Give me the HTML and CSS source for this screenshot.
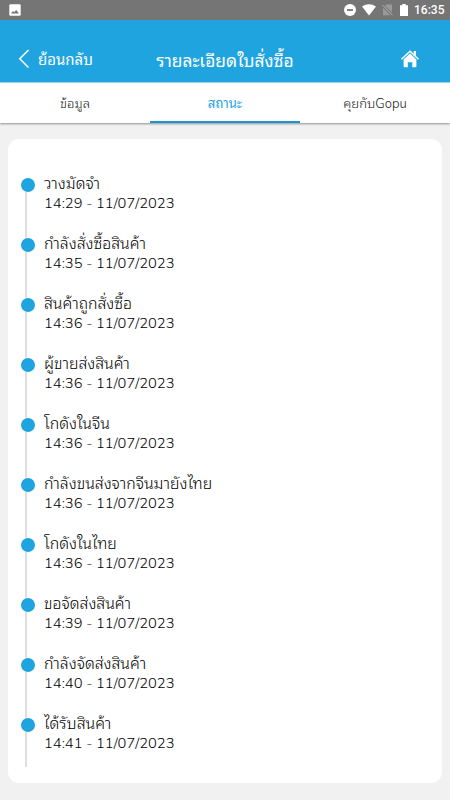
FILE: index.html
```html
<!DOCTYPE html>
<html lang="th">
<head>
  <meta charset="UTF-8" />
  <meta name="viewport" content="width=device-width, initial-scale=1.0"/>
  <title>รายละเอียดใบสั่งซื้อ</title>
  <link rel="stylesheet" href="styles.css">
</head>
<body>
  <div class="statusbar">
    <svg class="picture" width="12" height="12" viewBox="0 0 12 12"><rect x="0.3" y="0.3" width="11.4" height="11.4" rx="1.3" fill="#fff"/><path d="M2 9.5l2-2.6 1.2 1.4L7.2 6 10 9.5z" fill="#757575"/></svg>
    <div class="status-icons">
      <svg width="12" height="12" viewBox="0 0 12 12"><circle cx="6" cy="6" r="6" fill="#fff"/><rect x="3" y="5.1" width="6" height="1.8" fill="#757575"/></svg>
      <svg width="14" height="12" viewBox="0 0 14 12"><path d="M0 2.6C4 -0.7 10 -0.7 14 2.6L7 11.4z" fill="#fff"/></svg>
      <svg class="sim" width="11" height="12" viewBox="0 0 11 12"><path d="M4.2 0.6H10v8L3 1.8z M1 3.8l7.3 7.4H1z" fill="#999"/><path d="M0.4 0.9l10.2 10.4" stroke="#b5b5b5"/></svg>
      <svg class="battery" width="8" height="12" viewBox="0 0 8 12"><path d="M2.3 0h3.4v1.3H8V12H0V1.3h2.3z" fill="#fff"/></svg>
      <span class="clock">16:35</span>
    </div>
  </div>

  <header>
    <a class="back" href="#back">
      <svg width="12" height="20" viewBox="0 0 12 20"><path d="M10.5 1L1.8 9.8l8.7 8.7" fill="none" stroke="#fff" stroke-width="1.5"/></svg>
      <span>ย้อนกลับ</span>
    </a>
    <h1>รายละเอียดใบสั่งซื้อ</h1>
    <a class="home" href="#home">
      <svg width="18" height="18" viewBox="0 0 18 18"><path d="M0.5 9.2L9 1.2l8.5 8" fill="none" stroke="#fff" stroke-width="1.5"/><path d="M12.7 1h2.2v5l-2.2-2z M9 3.6l6.4 6v6.6q0 1-1 1h-3.1v-5H6.8v5H3.6q-1 0-1-1V9.6z" fill="#fff"/></svg>
    </a>
  </header>

  <nav>
    <a href="#info">ข้อมูล</a>
    <a class="active" href="#status">สถานะ</a>
    <a href="#chat">คุยกับGopu</a>
  </nav>

  <main>
    <ul class="timeline">
      <li><h2>วางมัดจำ</h2><p>14:29 - 11/07/2023</p></li>
      <li><h2>กำลังสั่งซื้อสินค้า</h2><p>14:35 - 11/07/2023</p></li>
      <li><h2>สินค้าถูกสั่งซื้อ</h2><p>14:36 - 11/07/2023</p></li>
      <li><h2>ผู้ขายส่งสินค้า</h2><p>14:36 - 11/07/2023</p></li>
      <li><h2>โกดังในจีน</h2><p>14:36 - 11/07/2023</p></li>
      <li><h2>กำลังขนส่งจากจีนมายังไทย</h2><p>14:36 - 11/07/2023</p></li>
      <li><h2>โกดังในไทย</h2><p>14:36 - 11/07/2023</p></li>
      <li><h2>ขอจัดส่งสินค้า</h2><p>14:39 - 11/07/2023</p></li>
      <li><h2>กำลังจัดส่งสินค้า</h2><p>14:40 - 11/07/2023</p></li>
      <li><h2>ได้รับสินค้า</h2><p>14:41 - 11/07/2023</p></li>
    </ul>
  </main>
</body>
</html>
```

FILE: styles.css
```css
* { box-sizing: border-box; margin: 0; padding: 0; }
body {
  height: 800px;
  background: #f1f1f1;
  color: black;
  font-family: Nunito, "Noto Sans Thai Looped", "Noto Sans", sans-serif;
  overflow: hidden;
}
a { color: inherit; text-decoration: none; }
svg { display: block; flex: none; }
.statusbar {
  display: flex;
  justify-content: space-between;
  align-items: center;
  height: 20px;
  padding: 0 7px 0 9px;
  background: #757575;
  color: white;
}
.status-icons { display: flex; align-items: center; }
.status-icons svg { margin-right: 6px; }
.status-icons .sim { margin-right: 7px; }
.clock { width: 29px; font: 500 12px/20px Roboto, sans-serif; }
header {
  display: grid;
  grid-template-columns: 1fr auto 1fr;
  align-items: center;
  height: 63px;
  padding: 16px 18px 0;
  background: #1fa4df;
  border-bottom: 1px solid #a5d8f2;
  color: white;
}
.back { display: flex; align-items: center; gap: 8px; font-size: 15px; line-height: 20px; }
.back span { padding-top: 2px; }
header h1 { padding-top: 3px; font-size: 17.4px; font-weight: 400; line-height: 22px; }
.home { justify-self: end; margin-right: 13px; }
nav {
  display: flex;
  height: 40px;
  background: white;
  box-shadow: 0 1px 2px rgba(0, 0, 0, 0.4);
}
nav a {
  flex: 1;
  text-align: center;
  font-size: 13.1px;
  font-weight: 300;
  line-height: 43px;
  color: #222;
}
nav .active { color: #1fa4df; font-weight: 400; border-bottom: 2px solid #1a96d4; }
main {
  height: 644px;
  margin: 16px 8px;
  padding: 33px 13px;
  background: white;
  border-radius: 11px;
}
.timeline { list-style: none; }
.timeline li {
  position: relative;
  height: 60px;
  padding-left: 23px;
}
.timeline li:last-child { height: 55px; }
.timeline li::before {
  content: "";
  position: absolute;
  left: 4px;
  top: 20px;
  width: 2px;
  bottom: -6px;
  background: #dedede;
}
.timeline li:last-child::before { bottom: 0; }
.timeline li::after {
  content: "";
  position: absolute;
  left: 0;
  top: 6px;
  width: 14px;
  height: 14px;
  border-radius: 50%;
  background: #1fa4df;
}
.timeline h2 {
  height: 21px;
  font-size: 15.9px;
  font-weight: 300;
  line-height: 24px;
}
.timeline p { font-size: 14.7px; font-weight: 350; line-height: 20px; }
```
